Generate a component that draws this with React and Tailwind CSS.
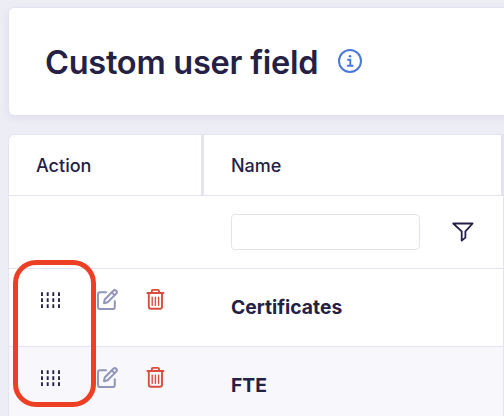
const fields = [
  { id: 1, name: "Certificates" },
  { id: 2, name: "FTE" },
];

function InfoIcon() {
  return (
    <svg width="26" height="26" viewBox="0 0 26 26" fill="none" stroke="#4b78dc">
      <circle cx="13" cy="13" r="11" strokeWidth="2" />
      <path d="M10.2 11.8H13.3V17.5M9.9 17.7H16.4" strokeWidth="1.9" />
      <circle cx="13.1" cy="8.3" r="1.3" fill="#4b78dc" stroke="none" />
    </svg>
  );
}

function FilterIcon() {
  return (
    <svg width="24" height="24" viewBox="0 0 24 24" fill="none" stroke="#242145" strokeWidth="1.8">
      <path d="M2.2 3.5H21.6L14.4 11.4V17.6L10.7 20.6V11.4Z" strokeLinejoin="round" />
    </svg>
  );
}

function DragIcon() {
  return (
    <svg width="20" height="16" viewBox="0 0 20 16" stroke="#242145" strokeWidth="1.9">
      <path
        d="M1 0V16M6.7 0V16M12.3 0V16M18 0V16"
        strokeDasharray="3.7 2.3"
        strokeDashoffset="-0.2"
      />
    </svg>
  );
}

function EditIcon() {
  return (
    <svg
      width="24"
      height="24"
      viewBox="0 0 24 24"
      fill="none"
      stroke="#9296b8"
      strokeWidth="2"
      strokeLinecap="round"
      strokeLinejoin="round"
    >
      <path d="M10 4.2H4.1Q2 4.2 2 6.3V18.9Q2 21 4.1 21H16.7Q18.8 21 18.8 18.9V13.3" />
      <path d="M8 15.2L8.7 11.5L17.4 2.8Q18.8 1.4 20.2 2.8Q21.6 4.2 20.2 5.6L11.6 14.3Z" />
      <path d="M15.8 4.4L18.6 7.2" />
    </svg>
  );
}

function TrashIcon() {
  return (
    <svg
      width="20"
      height="24"
      viewBox="0 0 20 24"
      fill="none"
      stroke="#dc4c3c"
      strokeWidth="1.9"
      strokeLinecap="round"
      strokeLinejoin="round"
    >
      <path d="M2.4 5H18.4M6.8 4.8V3.1Q6.8 1.9 8 1.9H12.8Q14 1.9 14 3.1V4.8" />
      <path d="M3.8 5.2V18.7Q3.8 20.8 5.9 20.8H14.9Q17 20.8 17 18.7V5.2" />
      <path d="M7.2 9.1V17.2M10.4 9.1V17.2M13.6 9.1V17.2" strokeWidth="1.4" />
    </svg>
  );
}

function FieldRow({ name, striped }) {
  return (
    <div className={`flex h-[78px] border-t border-[#e4e3f0] ${striped ? "bg-[#f7f7fc]" : "bg-white"}`}>
      <div className="flex w-[195px] shrink-0 items-start pl-8 pt-[18px]">
        <div className="pt-[5px]">
          <DragIcon />
        </div>
        <div className="ml-[34.5px] pt-px">
          <EditIcon />
        </div>
        <div className="ml-[25.5px] pt-px">
          <TrashIcon />
        </div>
      </div>
      <div className="flex items-center pl-[27px] text-[19.3px] font-bold">{name}</div>
    </div>
  );
}

export default function App() {
  return (
    <div className="relative h-[416px] w-[504px] overflow-hidden bg-[#ededf6] pl-2 pt-[7px] font-['Inter',sans-serif] text-[#242145]">
      {/* Title card */}
      <div className="flex h-[108px] w-[520px] items-center rounded-md border border-b-0 border-[#e4e3f0] bg-white pl-9 shadow-[0_3px_8px_rgba(60,50,110,0.08)]">
        <h1 className="w-[273px] whitespace-nowrap pt-0.5 text-[32.5px] font-semibold leading-10 tracking-[-0.25px]">
          Custom user field
        </h1>
        <div className="ml-[19px] pb-0.5">
          <InfoIcon />
        </div>
      </div>

      {/* Fields table */}
      <div className="mt-[19px] h-[300px] w-[496px] overflow-hidden rounded-tl-md border-l border-t border-[#e4e3f0] bg-white">
        <div className="flex h-[60px] text-lg font-medium">
          <div className="flex w-[195px] items-center border-r-[3px] border-[#e4e3f0] pl-[27px] pt-0.5">Action</div>
          <div className="flex flex-1 items-center border-r-[3px] border-[#e4e3f0] pl-[27px] pt-0.5">Name</div>
        </div>

        <div className="border-r border-[#e4e3f0]">
          <div className="flex h-[73px] items-center border-t border-[#e4e3f0] pl-[222px]">
            <input
              type="text"
              className="h-9 w-[189px] rounded border border-[#e4e3f0] bg-white outline-none"
            />
            <div className="ml-[31px]">
              <FilterIcon />
            </div>
          </div>
          {fields.map((field, i) => (
            <FieldRow key={field.id} name={field.name} striped={i % 2 === 1} />
          ))}
        </div>
      </div>

      {/* Highlight around the drag handles */}
      <div className="absolute left-[13px] top-[260px] h-[147px] w-[83px] rounded-[23px] border-5 border-[#eb4024]"></div>
    </div>
  );
}
